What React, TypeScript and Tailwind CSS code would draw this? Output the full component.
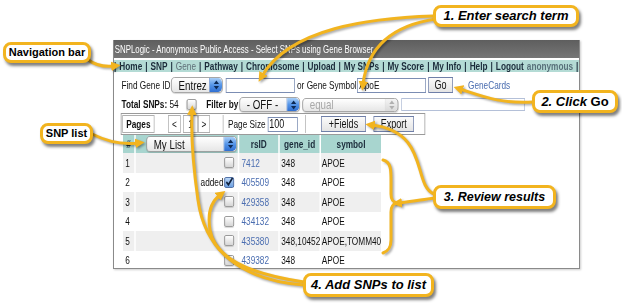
import React from 'react';

// fonts
const SANS = "font-['Liberation_Sans',Arial,sans-serif]";

/** Small Aqua style stepper arrows on the right of a select */
const Stepper = ({ disabled }: { disabled?: boolean }) => (
  <div
    className={`flex h-full w-[17px] items-center justify-center rounded-r-[5px] border-l ${
      disabled
        ? 'border-[#c8c8c8] bg-gradient-to-b from-[#f4f4f4] to-[#dadada]'
        : 'border-[#3a6fc4] bg-gradient-to-b from-[#a9cff7] via-[#5595e8] to-[#2f6fd2]'
    }`}
  >
    <svg width="9" height="10" viewBox="0 0 9 10">
      <path d="M4.5 0.5 L8 4 L1 4 Z" fill={disabled ? '#b0b0b0' : '#0d2a55'} />
      <path d="M4.5 9.5 L8 6 L1 6 Z" fill={disabled ? '#b0b0b0' : '#0d2a55'} />
    </svg>
  </div>
);

interface SelectProps {
  label: string;
  className: string;
  disabled?: boolean;
}

const Select = ({ label, className, disabled }: SelectProps) => (
  <div
    className={`flex items-center overflow-hidden rounded-[5px] border border-[#9a9a9a] bg-gradient-to-b from-white to-[#e6e6e6] shadow-[0_1px_1px_rgba(0,0,0,0.15)] ${className}`}
  >
    <span className={`flex-1 truncate pl-[9px] text-[13px] leading-none ${disabled ? 'text-[#a8a8a8]' : 'text-[#111]'}`}>
      {label}
    </span>
    <Stepper disabled={disabled} />
  </div>
);

const Checkbox = ({ checked }: { checked?: boolean }) =>
  checked ? (
    <div className="flex h-[11px] w-[13px] items-center justify-center rounded-[2px] border border-[#3c5f9c] bg-gradient-to-b from-[#b9d6f7] to-[#6c9fe0]">
      <svg width="12" height="10" viewBox="0 0 12 10">
        <path d="M2 5 L5 8 L11 0.5" stroke="#10223f" strokeWidth="2.2" fill="none" />
      </svg>
    </div>
  ) : (
    <div className="h-[11px] w-[13px] rounded-[2px] border border-[#8e8e8e] bg-gradient-to-b from-white to-[#d6d6d6] shadow-[0_1px_1px_rgba(0,0,0,0.15)]" />
  );

const Button = ({ label, className }: { label: string; className: string }) => (
  <div
    className={`flex h-[16px] items-center justify-center border border-[#6f7fa8] bg-gradient-to-b from-[#fbfbfb] to-[#e4e4e4] text-[12px] text-[#111] ${className}`}
  >
    {label}
  </div>
);

const Callout = ({ className, children }: { className: string; children: React.ReactNode }) => (
  <div
    className={`absolute flex items-center justify-center whitespace-nowrap rounded-[8px] border-[3px] border-[#f2b41f] bg-white font-bold text-black shadow-[2px_3px_3px_rgba(0,0,0,0.5)] ${SANS} ${className}`}
  >
    {children}
  </div>
);

const navItems = ['Home', 'SNP', 'Gene', 'Pathway', 'Chromosome', 'Upload', 'My SNPs', 'My Score', 'My Info', 'Help'];

const rows = [
  { n: 1, rs: '7412', gene: '348', sym: 'APOE' },
  { n: 2, rs: '405509', gene: '348', sym: 'APOE', added: true },
  { n: 3, rs: '429358', gene: '348', sym: 'APOE' },
  { n: 4, rs: '434132', gene: '348', sym: 'APOE' },
  { n: 5, rs: '435380', gene: '348,10452', sym: 'APOE,TOMM40' },
  { n: 6, rs: '439382', gene: '348', sym: 'APOE' },
];

// column widths are in the unscaled page (the page is squeezed to 75% across)
const COLS = 'grid grid-cols-[15px_136px_52px_53px_80px] gap-x-[2px]';

/** Yellow curved arrows with a soft shadow */
const Arrows = () => {
  const paths = [
    'M 87 59 C 96 66, 105 67, 114 66',
    'M 434 16 C 370 18, 290 28, 262 76',
    'M 436 19 C 395 25, 368 45, 363 84',
    'M 533 102 C 500 104, 482 96, 460 89',
    'M 92 134 C 108 142, 122 145, 138 143',
    'M 434 198 C 420 200, 410 202, 399 203',
    'M 434 194 C 412 185, 430 132, 372 125',
    'M 304 285 C 240 280, 205 250, 198 200 C 193 165, 191 135, 192 112',
    'M 304 282 C 255 275, 215 260, 210 230 C 207 212, 212 201, 220 195',
  ];
  const brace =
    'M 383 160 C 391 162, 391 170, 391 180 L 391 194 C 391 200, 393 202, 397 203 C 393 204, 391 206, 391 212 L 391 240 C 391 248, 388 251, 383 253';
  return (
    <svg className="pointer-events-none absolute left-0 top-0" width="622" height="303" viewBox="0 0 622 303">
      <defs>
        <marker id="head" viewBox="0 0 10 10" refX="3" refY="5" markerWidth="3.2" markerHeight="3.2" orient="auto">
          <path d="M0 0 L10 5 L0 10 Z" fill="#f2b41f" />
        </marker>
        <marker id="headShadow" viewBox="0 0 10 10" refX="3" refY="5" markerWidth="3.2" markerHeight="3.2" orient="auto">
          <path d="M0 0 L10 5 L0 10 Z" fill="rgba(0,0,0,0.35)" />
        </marker>
        <filter id="blur" x="-10%" y="-10%" width="120%" height="120%">
          <feGaussianBlur stdDeviation="0.8" />
        </filter>
      </defs>
      <g transform="translate(1.5 1.5)" filter="url(#blur)">
        {paths.map((d) => (
          <path key={d} d={d} stroke="rgba(0,0,0,0.35)" strokeWidth="3" fill="none" markerEnd="url(#headShadow)" />
        ))}
        <path d={brace} stroke="rgba(0,0,0,0.35)" strokeWidth="3" fill="none" />
      </g>
      {paths.map((d) => (
        <path key={d} d={d} stroke="#f2b41f" strokeWidth="3" fill="none" strokeLinecap="round" markerEnd="url(#head)" />
      ))}
      <path d={brace} stroke="#f2b41f" strokeWidth="3" fill="none" strokeLinecap="round" />
    </svg>
  );
};

export default function App() {
  return (
    <div className={`relative h-[303px] w-[622px] overflow-hidden bg-white ${SANS}`}>
      <div className="pl-[113px] pt-[40px]">
        {/* browser page: the screenshot is squeezed horizontally */}
        <div className="h-[229px] w-[467px] overflow-hidden border-x border-b border-[#8a8a8a] bg-white shadow-[1px_1px_2px_rgba(0,0,0,0.2)]">
          <div className="w-[620px] origin-top-left scale-x-75">
            <div className="h-[18px] bg-gradient-to-b from-[#5e5e5e] to-[#767676] pl-[1px] text-[10.5px] leading-[18px] text-white">
              SNPLogic - Anonymous Public Access - Select SNPs using Gene Browser
            </div>
            <div className="mt-[2px] flex h-[12px] items-center whitespace-nowrap bg-[#b4dbd5] text-[11px] font-bold leading-[12px] text-[#1b2b3a]">
              <span className="pr-[4px]">|</span>
              {navItems.map((item) => (
                <React.Fragment key={item}>
                  <span className={item === 'Gene' ? 'font-normal text-[#5f6f78]' : ''}>{item}</span>
                  <span className="px-[4px]">|</span>
                </React.Fragment>
              ))}
              <span>Logout</span>
              <span className="pl-[4px] text-[#58707a]">anonymous</span>
              <span className="pl-[4px]">|</span>
            </div>

            <div className="pl-[10px] text-[11px] text-[#111]">
              {/* search row */}
              <div className="mt-[5px] flex h-[16px] items-center">
                <span className="w-[66px]">Find Gene ID</span>
                <Select label="Entrez" className="h-[16px] w-[69px]" />
                <div className="ml-[4px] h-[15px] w-[92px] border border-[#7b8db3] bg-white" />
                <span className="ml-[3px] w-[80px]">or Gene Symbol</span>
                <div className="h-[15px] w-[92px] border border-[#7b8db3] bg-white pl-[2px] leading-[13px]">ApoE</div>
                <Button label="Go" className="ml-[3px] w-[33px]" />
                <span className="ml-[20px] text-[#4a6db0]">GeneCards</span>
              </div>

              {/* filter row */}
              <div className="mt-[4px] flex h-[15px] items-center">
                <span className="w-[87px]">
                  <b>Total SNPs:</b> 54
                </span>
                <Checkbox />
                <b className="ml-[13px] w-[44px]">Filter by</b>
                <Select label="- OFF -" className="h-[15px] w-[81px]" />
                <Select label="equal" className="ml-[3px] h-[14px] w-[128px]" disabled />
                <div className="ml-[4px] h-[13px] w-[165px] border border-[#b4c0d8] bg-white" />
              </div>

              {/* paging row */}
              <div className="-ml-[1px] mt-[1px] flex h-[22px] w-[406px] items-center border border-[#9a9a9a] px-[1px]">
                <div className="flex h-[18px] w-[43px] items-center justify-center border border-[#b0b0b0] font-bold">Pages</div>
                <div className="ml-[18px] flex h-[18px] w-[17px] items-center justify-center border border-[#b0b0b0]">&lt;</div>
                <div className="ml-[3px] flex h-[18px] w-[20px] items-center justify-center border border-[#b0b0b0]">1</div>
                <div className="flex h-[18px] w-[16px] items-center justify-center border border-[#b0b0b0]">&gt;</div>
                <div className="ml-[17px] flex h-[18px] w-[106px] items-center border-l border-[#b0b0b0] pl-[6px]">
                  <span className="w-[53px]">Page Size</span>
                  <div className="h-[15px] w-[40px] border border-[#7b8db3] bg-white pl-[1px] text-[12px] leading-[13px]">100</div>
                </div>
                <div className="ml-[4px] flex h-[18px] flex-1 items-center gap-[10px] border-l border-[#b0b0b0] pl-[20px]">
                  <Button label="+Fields" className="w-[60px]" />
                  <Button label="Export" className="w-[54px]" />
                </div>
              </div>

              {/* results table */}
              <div className="ml-[2px]">
                <div className={`${COLS} h-[18px] text-[11px] font-bold text-[#1b2b3a]`}>
                  <div className="flex items-center justify-center bg-[#a8d5cf]">#</div>
                  <div className="flex items-center bg-[#a8d5cf] pl-[14px] pr-[1px]">
                    <Select label="My List" className="h-[16px] flex-1 font-normal" />
                  </div>
                  <div className="flex items-center justify-center bg-[#a8d5cf]">rsID</div>
                  <div className="flex items-center justify-center bg-[#a8d5cf]">gene_id</div>
                  <div className="flex items-center justify-center bg-[#a8d5cf]">symbol</div>
                </div>
                {rows.map((r) => {
                  const bg = r.n % 2 === 1 ? 'bg-[#efefef]' : 'bg-white';
                  return (
                    <div key={r.n} className={`${COLS} h-[19.5px] text-[11px]`}>
                      <div className={`flex items-center pl-[3px] ${bg}`}>{r.n}</div>
                      <div className={`flex items-center justify-end gap-[1px] pr-[5px] ${bg}`}>
                        {r.added && <span>added</span>}
                        <Checkbox checked={r.added} />
                      </div>
                      <div className={`flex items-center pl-[3px] text-[#4a6db0] ${bg}`}>{r.rs}</div>
                      <div className={`flex items-center pl-[2px] ${bg}`}>{r.gene}</div>
                      <div className={`flex items-center pl-[1px] ${bg}`}>{r.sym}</div>
                    </div>
                  );
                })}
              </div>
            </div>
          </div>
        </div>
      </div>

      <Arrows />

      <Callout className="left-[3px] top-[42px] h-[21px] w-[88px] text-[11px]">Navigation bar</Callout>
      <Callout className="left-[433px] top-[5px] h-[22px] w-[146px] text-[13px] italic">1. Enter search term</Callout>
      <Callout className="left-[532px] top-[90px] h-[23px] w-[86px] text-[13px]">
        <i>2. Click</i>&nbsp;Go
      </Callout>
      <Callout className="left-[40px] top-[123px] h-[21px] w-[53px] text-[11px]">SNP list</Callout>
      <Callout className="left-[433px] top-[185px] h-[24px] w-[123px] text-[12.5px] italic">3. Review results</Callout>
      <Callout className="left-[303px] top-[273px] h-[24px] w-[131px] text-[13px] italic">4. Add SNPs to list</Callout>
    </div>
  );
}
